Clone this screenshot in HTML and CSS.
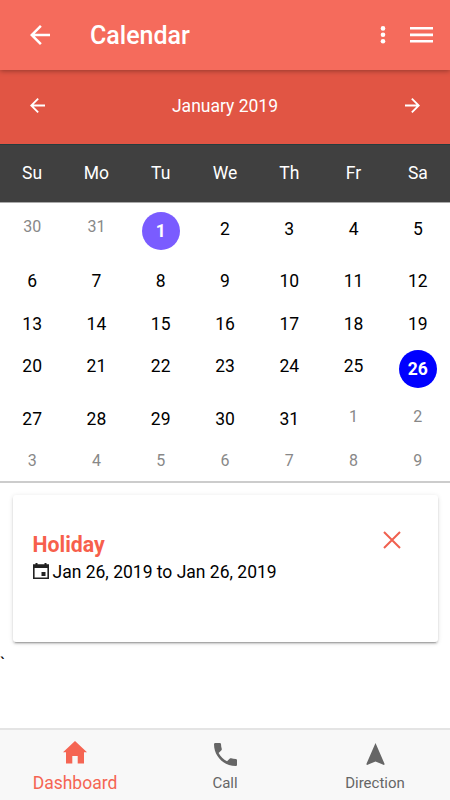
FILE: index.html
```html
<!DOCTYPE html>
<html lang="en">
<head>
    <title>Calendar</title>
    <meta charset="UTF-8">
    <meta name="viewport" content="width=device-width, initial-scale=1">
    <link rel="stylesheet" href="styles.css">
</head>
<body>

<header class="toolbar">
    <svg class="back-icon" viewBox="4 4 16 16"><path d="M20 11H7.83l5.59-5.59L12 4l-8 8 8 8 1.41-1.41L7.83 13H20v-2z"/></svg>
    <h1>Calendar</h1>
    <svg class="more-icon" viewBox="0 0 6 18"><circle cx="3" cy="2.4" r="2.3"/><circle cx="3" cy="8.8" r="2.3"/><circle cx="3" cy="15.2" r="2.3"/></svg>
    <svg class="menu-icon" viewBox="0 0 23 16"><path d="M0 0h23v2.6H0zM0 6.6h23v2.6H0zM0 13h23v2.6H0z"/></svg>
</header>

<div class="month-bar">
    <svg class="arrow-icon" viewBox="4 4 16 16"><path d="M20 11H7.83l5.59-5.59L12 4l-8 8 8 8 1.41-1.41L7.83 13H20v-2z"/></svg>
    <span>January 2019</span>
    <svg class="arrow-icon" viewBox="4 4 16 16"><path d="M12 4l-1.41 1.41L16.17 11H4v2h12.17l-5.58 5.59L12 20l8-8z"/></svg>
</div>

<div class="weekdays">
    <span>Su</span><span>Mo</span><span>Tu</span><span>We</span><span>Th</span><span>Fr</span><span>Sa</span>
</div>

<main>
    <div class="days">
        <span class="other">30</span><span class="other">31</span><span><b class="today">1</b></span><span>2</span><span>3</span><span>4</span><span>5</span>
        <span>6</span><span>7</span><span>8</span><span>9</span><span>10</span><span>11</span><span>12</span>
        <span>13</span><span>14</span><span>15</span><span>16</span><span>17</span><span>18</span><span>19</span>
        <span>20</span><span>21</span><span>22</span><span>23</span><span>24</span><span>25</span><span><b class="event">26</b></span>
        <span>27</span><span>28</span><span>29</span><span>30</span><span>31</span><span class="other">1</span><span class="other">2</span>
        <span class="other">3</span><span class="other">4</span><span class="other">5</span><span class="other">6</span><span class="other">7</span><span class="other">8</span><span class="other">9</span>
    </div>

    <div class="card">
        <div>
            <h2>Holiday</h2>
            <p>
                <svg class="date-icon" viewBox="0 0 16 16"><path fill-rule="evenodd" d="M2.5 0h2v1.3h7V0h2v1.3H16V16H0V1.3h2.500zM1.600 5v9.400h12.800V5zM8.500 9h4v4h-4z"/></svg>
                Jan 26, 2019 to Jan 26, 2019
            </p>
        </div>
        <svg class="close-icon" viewBox="0 0 18 18"><path d="M1 1l16 16M17 1L1 17"/></svg>
    </div>
    <div class="stray">`</div>
</main>

<footer class="tabs">
    <a class="tab active">
        <svg class="home-icon" viewBox="0 0 24 23"><path d="M12 0L0 11.2h3V22.5h6.3V15h5.4v7.5H21V11.2h3z"/></svg>
        <span>Dashboard</span>
    </a>
    <a class="tab">
        <svg class="call-icon" viewBox="3 3 18 18"><path d="M6.62 10.79c1.44 2.83 3.76 5.14 6.59 6.59l2.2-2.2c.27-.27.67-.36 1.02-.24 1.12.37 2.33.57 3.57.57.55 0 1 .45 1 1V20c0 .55-.45 1-1 1-9.39 0-17-7.61-17-17 0-.55.45-1 1-1h3.5c.55 0 1 .45 1 1 0 1.25.2 2.45.57 3.57.11.35.03.74-.25 1.02l-2.2 2.2z"/></svg>
        <span>Call</span>
    </a>
    <a class="tab">
        <svg class="direction-icon" viewBox="0 0 19 22"><path d="M9.5 0L.3 21.2l.8.8 8.4-3.6 8.4 3.6.8-.8z"/></svg>
        <span>Direction</span>
    </a>
</footer>

</body>
</html>
```

FILE: styles.css
```css
* {
    box-sizing: border-box;
}

body {
    font-family: Roboto, Arial, sans-serif;
    font-size: 17.5px;
    background: white;
    color: black;
    margin: 0;
    height: 800px;
    display: flex;
    flex-direction: column;
    overflow: hidden;
}

svg {
    display: block;
    fill: currentColor;
    flex-shrink: 0;
}

.toolbar {
    position: relative;
    z-index: 1;
    height: 70px;
    display: flex;
    align-items: center;
    padding: 0 17px 0 30px;
    background: #f56b5c;
    color: white;
    box-shadow: 0 1px 5px rgba(0, 0, 0, 0.35);
}

.toolbar h1 {
    flex: 1;
    margin: 0 0 0 40px;
    font-size: 25px;
    font-weight: 500;
}

.back-icon {
    width: 20px;
    height: 20px;
}

.more-icon {
    width: 6px;
    height: 18px;
    margin-right: 24px;
}

.menu-icon {
    width: 23px;
    height: 16px;
}

.month-bar {
    height: 74px;
    display: flex;
    align-items: center;
    justify-content: space-between;
    padding: 0 30px 3px;
    background: #e15544;
    color: white;
}

.arrow-icon {
    width: 15px;
    height: 15px;
}

.weekdays {
    height: 59px;
    display: grid;
    grid-template-columns: repeat(7, 1fr);
    text-align: center;
    line-height: 57px;
    background: #404040;
    color: white;
    border-top: 1px solid #263c3e;
    border-bottom: 1px solid #aaa;
}

main {
    flex: 1;
}

.days {
    height: 280px;
    padding-top: 5px;
    display: grid;
    grid-template-columns: repeat(7, 1fr);
    grid-template-rows: 52px 43px 42px 53px 44px 39px;
    text-align: center;
    line-height: 43px;
    border-bottom: 2px solid #ccc;
}

.days .other {
    color: #888;
    font-size: 16px;
    line-height: 37px;
}

.days b {
    display: block;
    width: 38px;
    height: 38px;
    margin: 4px auto 0;
    border-radius: 50%;
    line-height: 38px;
    color: white;
}

.days .today {
    background: #7a5cff;
}

.days .event {
    margin-top: 5px;
    background: #0000ff;
}

.card {
    height: 147px;
    margin: 12px 12.5px 0;
    padding: 36px 37px 0 20px;
    display: flex;
    justify-content: space-between;
    background: white;
    border-radius: 3px;
    box-shadow: 0 3px 1px -2px rgba(0, 0, 0, 0.2), 0 2px 2px rgba(0, 0, 0, 0.14), 0 1px 5px rgba(0, 0, 0, 0.12);
}

.card h2 {
    margin: 0;
    font-size: 21.3px;
    font-weight: 700;
    line-height: 27px;
    color: #f75f4c;
}

.card p {
    margin: 0;
    display: flex;
    align-items: center;
    gap: 4px;
    line-height: 28px;
}

.date-icon {
    width: 16px;
    height: 16px;
    margin-bottom: 3px;
    fill: #222;
}

.close-icon {
    width: 18px;
    height: 18px;
    fill: none;
    stroke: #f0604f;
    stroke-width: 2;
}

.stray {
    padding-top: 10px;
    line-height: 24px;
}

.tabs {
    height: 72px;
    display: flex;
    background: #f8f8f8;
    border-top: 2px solid #e4e4e4;
}

.tab {
    flex: 1;
    display: flex;
    flex-direction: column;
    align-items: center;
    justify-content: space-between;
    padding: 13px 0 8px;
    font-size: 15px;
    line-height: 18px;
    color: #666;
}

.tab.active {
    padding-top: 11px;
    font-size: 17.5px;
    color: #f56553;
}

.home-icon {
    width: 24px;
    height: 23px;
}

.call-icon {
    width: 23px;
    height: 23px;
}

.direction-icon {
    width: 19px;
    height: 22px;
}
```
